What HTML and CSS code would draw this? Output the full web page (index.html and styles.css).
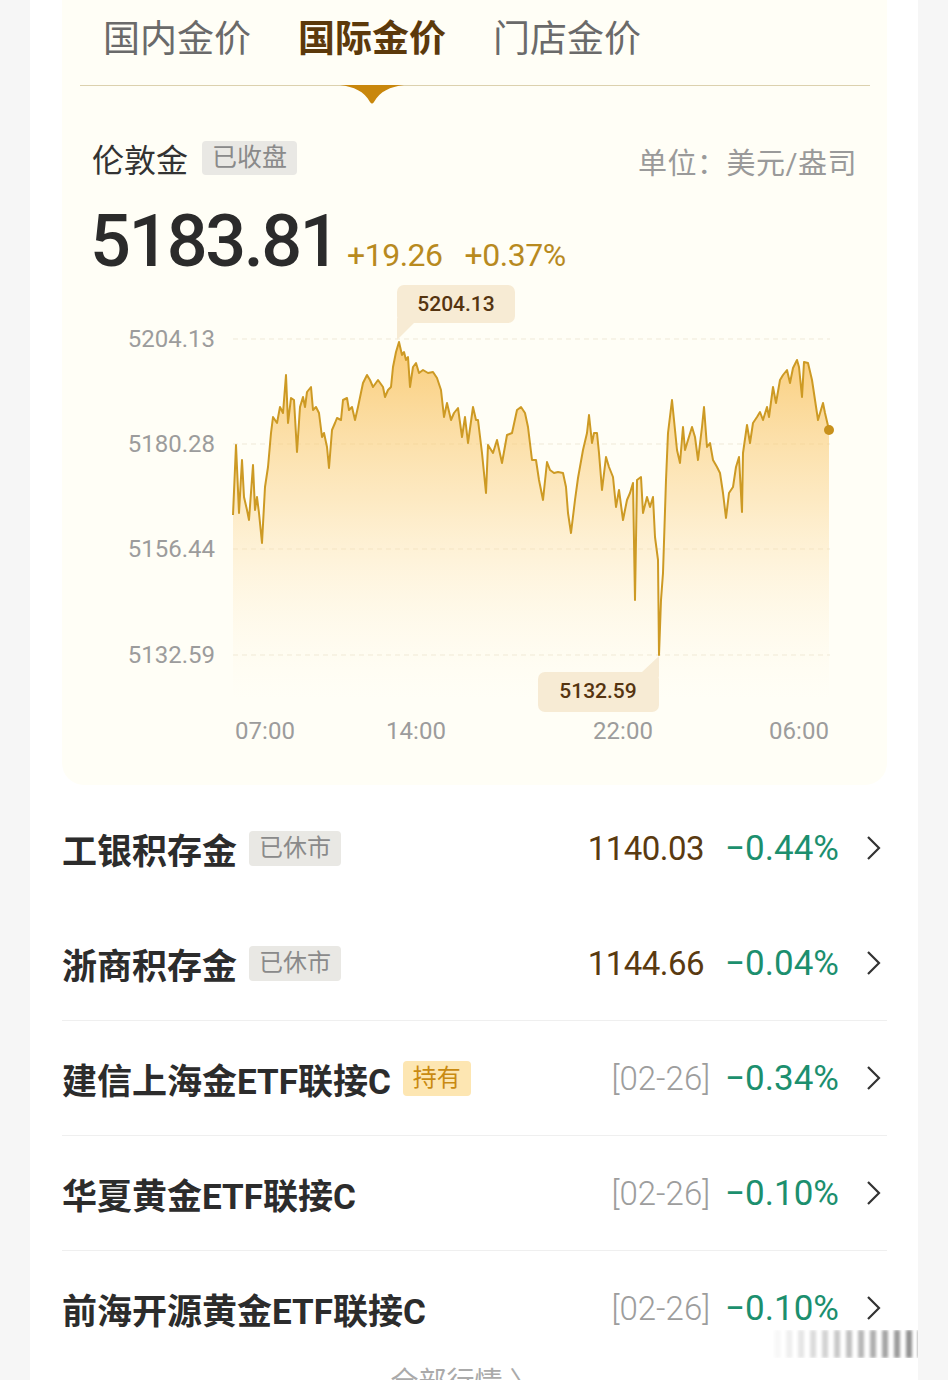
FILE: index.html
```html
<!DOCTYPE html>
<html lang="zh-CN">
<head>
    <meta charset="UTF-8">
    <meta name="viewport" content="width=device-width, initial-scale=1.0">
    <title>国际金价</title>
    <link rel="stylesheet" href="styles.css">
</head>
<body>
    <div class="page">
        <div class="panel">
            <div class="tabs">
                <div class="tab">国内金价</div>
                <div class="tab active">国际金价
                    <svg class="tab-arrow" width="64" height="19" viewBox="0 0 64 19">
                        <path d="M0,0 L64,0 C50,2 40,6 34,17 Q32,20 30,17 C24,6 14,2 0,0 Z" fill="#c9870c"/>
                    </svg>
                </div>
                <div class="tab">门店金价</div>
            </div>

            <div class="quote-head">
                <div class="quote-name">伦敦金<span class="chip chip-grey">已收盘</span></div>
                <div class="quote-unit">单位：美元/盎司</div>
            </div>

            <div class="price-row">
                <span class="price">5183.81</span>
                <span class="change first">+19.26</span>
                <span class="change">+0.37%</span>
            </div>

            <svg class="chart" width="825" height="480" viewBox="62 280 825 480">
                <defs>
                    <linearGradient id="goldFill" gradientUnits="userSpaceOnUse" x1="0" y1="340" x2="0" y2="700">
                        <stop offset="0" stop-color="#f8bd52" stop-opacity="0.78"/>
                        <stop offset="0.45" stop-color="#fbd48c" stop-opacity="0.48"/>
                        <stop offset="1" stop-color="#fff4dc" stop-opacity="0"/>
                    </linearGradient>
                </defs>

                <g class="grid">
                    <line x1="233" y1="339" x2="830" y2="339"/>
                    <line x1="233" y1="444" x2="830" y2="444"/>
                    <line x1="233" y1="549" x2="830" y2="549"/>
                    <line x1="233" y1="655" x2="830" y2="655"/>
                </g>

                <g class="axis-y">
                    <text x="215" y="341">5204.13</text>
                    <text x="215" y="446">5180.28</text>
                    <text x="215" y="551">5156.44</text>
                    <text x="215" y="657">5132.59</text>
                </g>

                <path class="area" d="M233,515 L236,445 L239,513 L242,460 L244,497 L247,510 L249,520 L253,465 L255,510 L257,497 L259,513 L262,543 L265,487 L268,467 L271,433 L273,417 L277,423 L280,407 L283,413 L286,375 L288,423 L291,398 L294,400 L297,452 L300,407 L303,397 L305,407 L307,392 L311,387 L313,410 L316,407 L319,413 L322,437 L324,433 L327,447 L329,468 L332,430 L335,423 L337,418 L341,420 L343,400 L347,398 L349,410 L352,407 L355,420 L358,407 L363,383 L367,375 L370,380 L373,387 L378,380 L383,387 L385,397 L388,390 L391,387 L393,367 L396,352 L399,342 L402,355 L404,352 L406,360 L408,357 L410,387 L413,367 L416,363 L419,373 L423,370 L428,373 L433,372 L437,378 L441,390 L444,417 L447,403 L451,420 L454,413 L458,408 L462,437 L465,417 L468,443 L473,407 L476,420 L478,420 L482,453 L486,493 L488,445 L493,453 L497,440 L502,463 L507,435 L512,433 L517,410 L521,407 L525,413 L528,427 L532,460 L536,460 L539,480 L543,500 L547,462 L550,470 L554,473 L558,472 L563,473 L566,487 L568,513 L571,533 L575,500 L578,478 L583,450 L587,433 L589,415 L592,443 L594,433 L597,433 L599,453 L602,490 L606,457 L609,467 L613,477 L616,507 L619,490 L623,520 L627,500 L630,493 L633,483 L635,600 L637,480 L641,477 L643,513 L647,497 L650,507 L653,497 L655,537 L658,560 L659,655 L661,600 L663,573 L666,480 L668,433 L672,400 L674,420 L677,450 L680,463 L683,427 L685,450 L688,440 L692,427 L695,437 L698,460 L702,427 L704,407 L707,447 L710,443 L713,460 L717,467 L720,473 L723,493 L726,518 L729,493 L733,487 L736,467 L739,457 L742,512 L743,453 L747,425 L750,443 L753,423 L757,417 L760,412 L763,420 L767,407 L769,417 L773,387 L776,403 L780,380 L783,375 L787,370 L790,383 L793,368 L797,360 L799,367 L802,397 L804,362 L808,363 L812,380 L815,400 L818,420 L823,403 L825,413 L829,430 L829,700 L233,700 Z"/>
                <path class="line" d="M233,515 L236,445 L239,513 L242,460 L244,497 L247,510 L249,520 L253,465 L255,510 L257,497 L259,513 L262,543 L265,487 L268,467 L271,433 L273,417 L277,423 L280,407 L283,413 L286,375 L288,423 L291,398 L294,400 L297,452 L300,407 L303,397 L305,407 L307,392 L311,387 L313,410 L316,407 L319,413 L322,437 L324,433 L327,447 L329,468 L332,430 L335,423 L337,418 L341,420 L343,400 L347,398 L349,410 L352,407 L355,420 L358,407 L363,383 L367,375 L370,380 L373,387 L378,380 L383,387 L385,397 L388,390 L391,387 L393,367 L396,352 L399,342 L402,355 L404,352 L406,360 L408,357 L410,387 L413,367 L416,363 L419,373 L423,370 L428,373 L433,372 L437,378 L441,390 L444,417 L447,403 L451,420 L454,413 L458,408 L462,437 L465,417 L468,443 L473,407 L476,420 L478,420 L482,453 L486,493 L488,445 L493,453 L497,440 L502,463 L507,435 L512,433 L517,410 L521,407 L525,413 L528,427 L532,460 L536,460 L539,480 L543,500 L547,462 L550,470 L554,473 L558,472 L563,473 L566,487 L568,513 L571,533 L575,500 L578,478 L583,450 L587,433 L589,415 L592,443 L594,433 L597,433 L599,453 L602,490 L606,457 L609,467 L613,477 L616,507 L619,490 L623,520 L627,500 L630,493 L633,483 L635,600 L637,480 L641,477 L643,513 L647,497 L650,507 L653,497 L655,537 L658,560 L659,655 L661,600 L663,573 L666,480 L668,433 L672,400 L674,420 L677,450 L680,463 L683,427 L685,450 L688,440 L692,427 L695,437 L698,460 L702,427 L704,407 L707,447 L710,443 L713,460 L717,467 L720,473 L723,493 L726,518 L729,493 L733,487 L736,467 L739,457 L742,512 L743,453 L747,425 L750,443 L753,423 L757,417 L760,412 L763,420 L767,407 L769,417 L773,387 L776,403 L780,380 L783,375 L787,370 L790,383 L793,368 L797,360 L799,367 L802,397 L804,362 L808,363 L812,380 L815,400 L818,420 L823,403 L825,413 L829,430"/>
                <circle cx="829" cy="430" r="5" fill="#c8911c"/>

                <!-- 最高 / 最低 标记 -->
                <g class="marker">
                    <path d="M397,318 L397,340 L414,323 Z"/>
                    <rect x="397" y="285" width="118" height="38" rx="7"/>
                    <text x="456" y="305">5204.13</text>
                </g>
                <g class="marker">
                    <path d="M659,677 L659,656 L642,672 Z"/>
                    <rect x="538" y="672" width="121" height="40" rx="7"/>
                    <text x="598" y="692">5132.59</text>
                </g>

                <g class="axis-x">
                    <text x="265" y="733">07:00</text>
                    <text x="416" y="733">14:00</text>
                    <text x="623" y="733">22:00</text>
                    <text x="799" y="733">06:00</text>
                </g>
            </svg>
        </div>

        <div class="list">
            <div class="row no-line">
                <div class="row-name">工银积存金<span class="chip chip-grey">已休市</span></div>
                <div class="row-right">
                    <span class="row-price">1140.03</span>
                    <span class="row-pct">−0.44%</span>
                    <svg class="chevron" width="16" height="26" viewBox="0 0 16 26"><polyline points="3,2 14,13 3,24"/></svg>
                </div>
            </div>
            <div class="row">
                <div class="row-name">浙商积存金<span class="chip chip-grey">已休市</span></div>
                <div class="row-right">
                    <span class="row-price">1144.66</span>
                    <span class="row-pct">−0.04%</span>
                    <svg class="chevron" width="16" height="26" viewBox="0 0 16 26"><polyline points="3,2 14,13 3,24"/></svg>
                </div>
            </div>
            <div class="row">
                <div class="row-name">建信上海金ETF联接C<span class="chip chip-gold">持有</span></div>
                <div class="row-right">
                    <span class="row-date">[02-26]</span>
                    <span class="row-pct">−0.34%</span>
                    <svg class="chevron" width="16" height="26" viewBox="0 0 16 26"><polyline points="3,2 14,13 3,24"/></svg>
                </div>
            </div>
            <div class="row">
                <div class="row-name">华夏黄金ETF联接C</div>
                <div class="row-right">
                    <span class="row-date">[02-26]</span>
                    <span class="row-pct">−0.10%</span>
                    <svg class="chevron" width="16" height="26" viewBox="0 0 16 26"><polyline points="3,2 14,13 3,24"/></svg>
                </div>
            </div>
            <div class="row no-line">
                <div class="row-name">前海开源黄金ETF联接C</div>
                <div class="row-right">
                    <span class="row-date">[02-26]</span>
                    <span class="row-pct">−0.10%</span>
                    <svg class="chevron" width="16" height="26" viewBox="0 0 16 26"><polyline points="3,2 14,13 3,24"/></svg>
                </div>
            </div>
        </div>

        <div class="more">全部行情 〉</div>

        <div class="watermark"></div>
    </div>
</body>
</html>
```

FILE: styles.css
```css
body {
    margin: 0;
    background: #f6f6f6;
    font-family: Roboto, "Noto Sans CJK SC", sans-serif;
}
.page {
    position: relative;
    width: 888px;
    height: 1380px;
    margin-left: 30px;
    background: #fff;
    overflow: hidden;
}
.panel {
    margin: 0 31px 0 32px;
    padding-bottom: 25px;
    background: #fffef6;
    border-radius: 0 0 22px 22px;
}

/* tabs */
.tabs {
    display: flex;
    gap: 47px;
    height: 86px;
    box-sizing: border-box;
    margin: 0 17px 0 18px;
    padding: 18px 0 0 23px;
    border-bottom: 1px solid #dcd1ae;
}
.tab {
    position: relative;
    font-size: 37px;
    line-height: 44px;
    color: #6a6a6a;
}
.tab.active {
    font-weight: 700;
    color: #5c390b;
}
.tab-arrow {
    position: absolute;
    left: 50%;
    top: 67px;
    margin-left: -32px;
}

/* quote header */
.quote-head {
    display: flex;
    justify-content: space-between;
    align-items: center;
    height: 36px;
    margin-top: 54px;
    padding: 0 30px;
}
.quote-name {
    display: flex;
    align-items: center;
    gap: 14px;
    font-size: 32px;
    color: #333;
}
.quote-unit {
    font-size: 29px;
    color: #9a9a9a;
    padding-top: 6px;
    letter-spacing: 0.5px;
}
.chip {
    display: inline-block;
    font-size: 24px;
    line-height: 35px;
    padding: 0 10px;
    border-radius: 4px;
    font-weight: 400;
}
.quote-name .chip {
    font-size: 25px;
    line-height: 34px;
    padding: 0 10px;
}
.chip-grey {
    background: #e9e8e4;
    color: #8a8a8a;
}
.chip-gold {
    background: #fde6b2;
    color: #c98a12;
}

/* price */
.price-row {
    display: flex;
    align-items: baseline;
    height: 76px;
    margin-top: 28px;
    padding: 0 30px 0 28px;
    line-height: 76px;
}
.price {
    font-size: 72px;
    font-weight: 500;
    color: #2b2b2b;
    letter-spacing: -2.5px;
}
.change {
    font-size: 32px;
    color: #b88a1f;
    margin-left: 22px;
    letter-spacing: -0.5px;
}
.change.first {
    margin-left: 9px;
}

/* chart */
.chart {
    display: block;
}
.grid line {
    stroke: #efe9d8;
    stroke-width: 1;
    stroke-dasharray: 5 4;
}
.axis-y text {
    font-size: 24px;
    fill: #9c9c9c;
    text-anchor: end;
    dominant-baseline: middle;
}
.axis-x text {
    font-size: 24px;
    fill: #9c9c9c;
    text-anchor: middle;
    dominant-baseline: middle;
}
.area {
    fill: url(#goldFill);
}
.line {
    fill: none;
    stroke: #cd9a24;
    stroke-width: 2;
    stroke-linejoin: round;
}
.marker rect,
.marker path {
    fill: #f7ebd4;
}
.marker text {
    font-size: 21px;
    font-weight: 500;
    fill: #553410;
    text-anchor: middle;
    dominant-baseline: middle;
}

/* list */
.list {
    margin: 6px 31px 0 32px;
}
.row {
    display: flex;
    justify-content: space-between;
    align-items: center;
    height: 114px;
    border-bottom: 1px solid #efefef;
}
.row.no-line {
    border-bottom-color: transparent;
}
.row-name {
    display: flex;
    align-items: center;
    gap: 12px;
    font-size: 35px;
    font-weight: 700;
    color: #2c2c2c;
}
.row-right {
    display: flex;
    align-items: center;
    padding-right: 6px;
}
.row-price {
    font-size: 33px;
    color: #5a3a10;
    letter-spacing: -0.5px;
    margin-right: 6px;
}
.row-date {
    font-size: 33px;
    color: #9d9d9d;
    font-weight: 300;
}
.row-pct {
    font-size: 35px;
    color: #1c8f6e;
    margin-left: 15px;
}
.chevron {
    margin-left: 26px;
}
.chevron polyline {
    fill: none;
    stroke: #333;
    stroke-width: 2.2;
}
.more {
    text-align: center;
    font-size: 28px;
    color: #aaa;
    margin-top: -6px;
    padding-right: 20px;
}
.watermark {
    position: absolute;
    left: 720px;
    top: 1330px;
    width: 176px;
    height: 28px;
    background: repeating-linear-gradient(90deg, #333 0 6px, transparent 6px 12px);
    -webkit-mask-image: linear-gradient(90deg, transparent 10%, rgba(0,0,0,0.85));
    mask-image: linear-gradient(90deg, transparent 10%, rgba(0,0,0,0.85));
    filter: blur(1.5px);
    opacity: 0.7;
}
```
